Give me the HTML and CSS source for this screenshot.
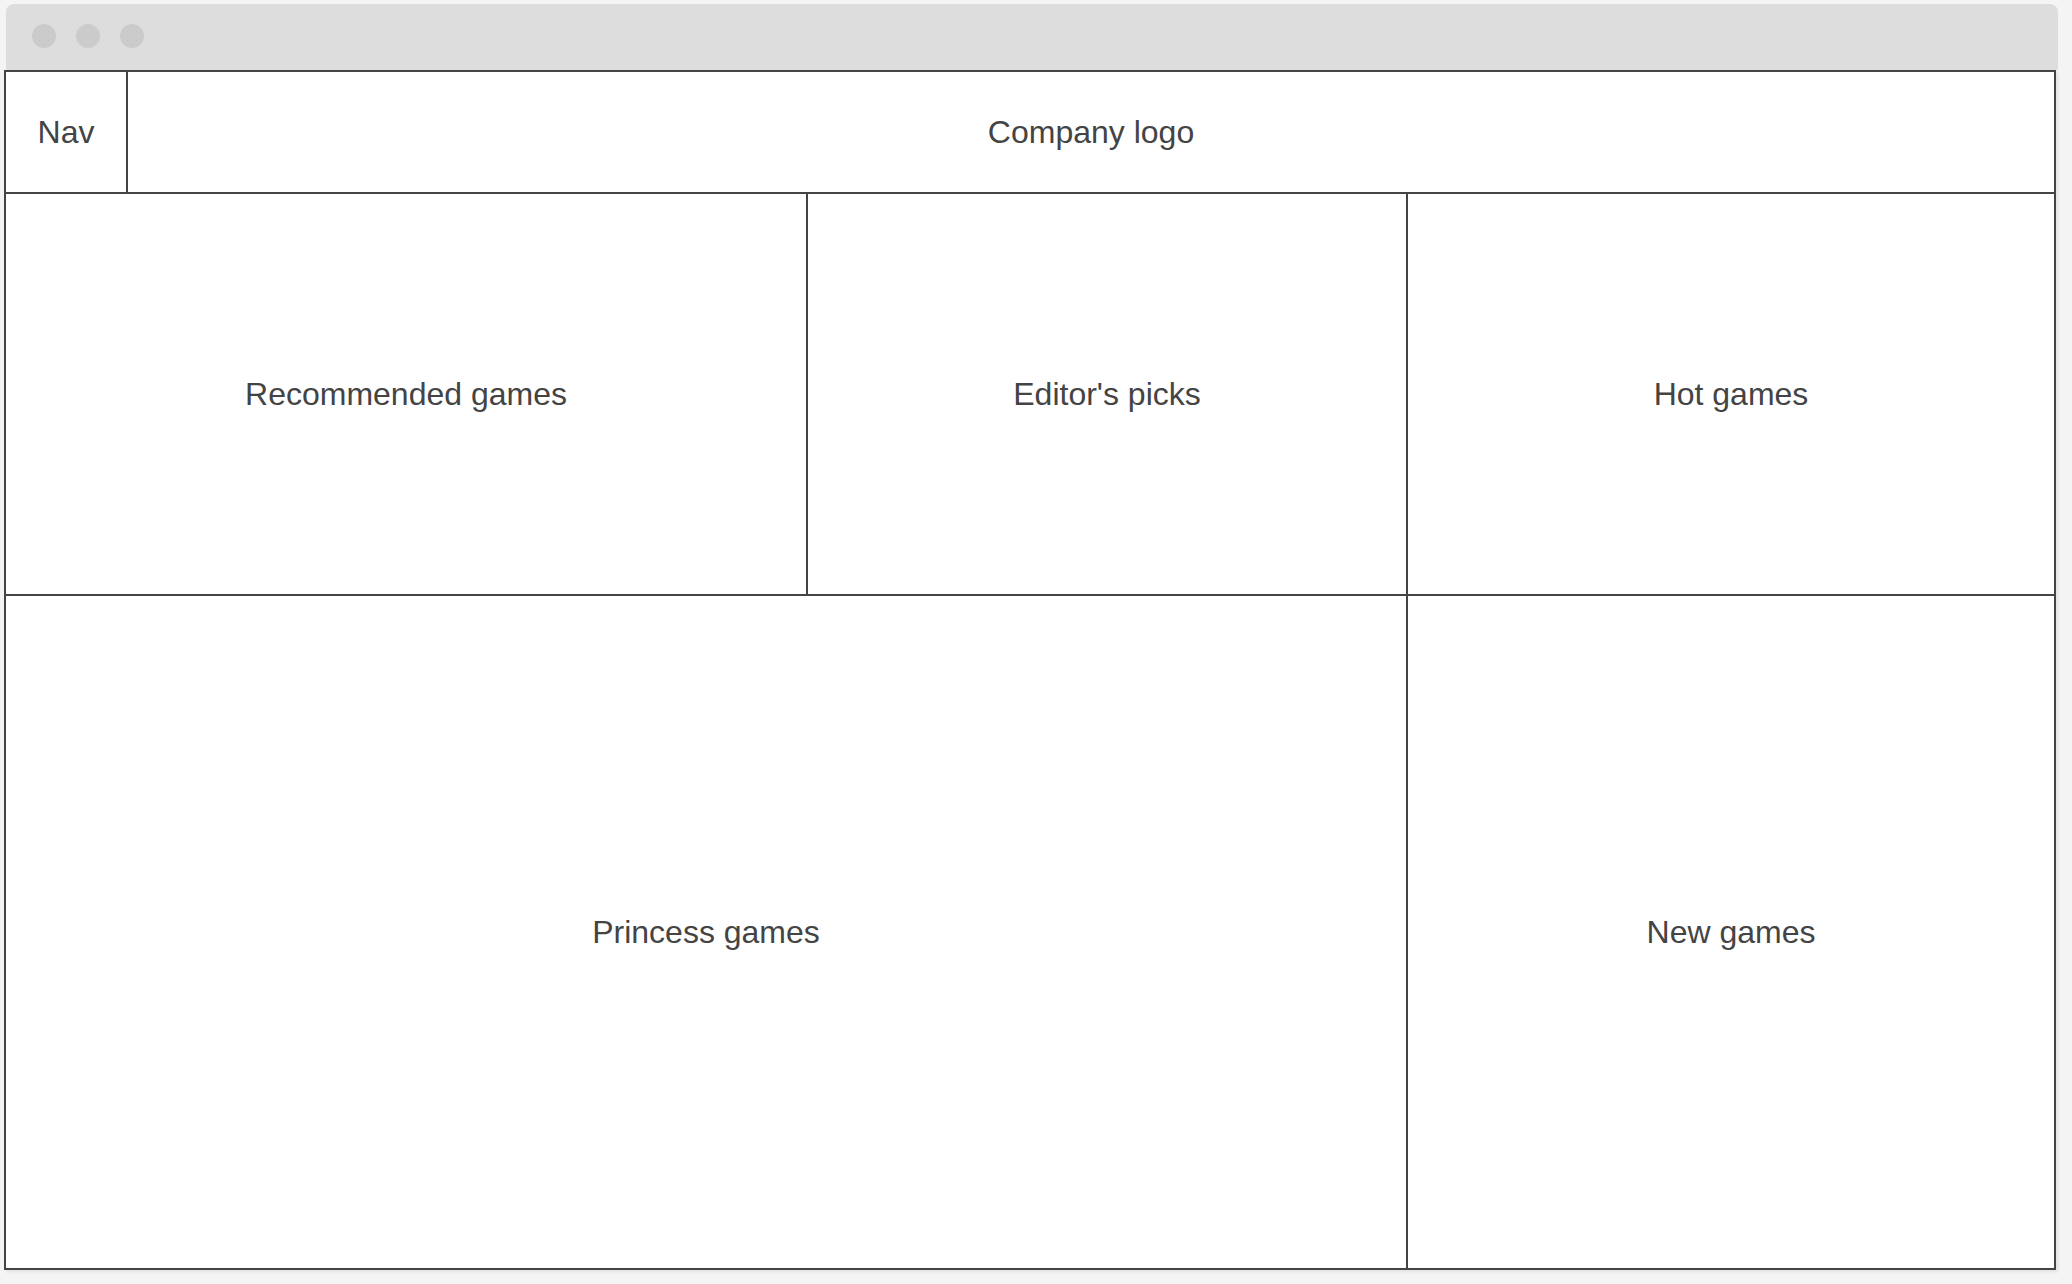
FILE: index.html
```html
<!DOCTYPE html>
<html lang="en">
<head>
  <meta charset="UTF-8" />
  <meta name="viewport" content="width=device-width, initial-scale=1" />
  <title>Games portal - wireframe</title>
  <link rel="stylesheet" href="styles.css">
</head>
<body>
  <div class="window-bar">
    <span class="dot"></span>
    <span class="dot"></span>
    <span class="dot"></span>
  </div>

  <main class="layout">
    <header class="top">
      <div class="cell nav">Nav</div>
      <div class="cell logo">Company logo</div>
    </header>
    <section class="cell">Recommended games</section>
    <section class="cell">Editor's picks</section>
    <section class="cell">Hot games</section>
    <section class="cell princess">Princess games</section>
    <section class="cell">New games</section>
  </main>
</body>
</html>
```

FILE: styles.css
```css
body {
  margin: 0;
  padding: 4px 0 0 0;
  background-color: #f4f4f4;
  font-family: 'Liberation Sans', Arial, sans-serif;
  color: #444;
  height: 1280px;
  overflow: hidden;
}

/* barra de la ventana con los tres puntos */
.window-bar {
  margin-left: 6px;
  width: 2052px;
  height: 66px;
  box-sizing: border-box;
  padding: 20px 0 0 26px;
  background: #dddddd;
  border-radius: 8px 8px 0 0;
  display: flex;
  gap: 20px;
}

.window-bar .dot {
  width: 24px;
  height: 24px;
  border-radius: 50%;
  background: #cbcbcb;
}

/* rejilla: el fondo oscuro hace de lineas */
.layout {
  margin-left: 4px;
  width: 2052px;
  box-sizing: border-box;
  display: grid;
  grid-template-columns: 800px 598px 646px;
  grid-template-rows: 120px 400px 672px;
  gap: 2px;
  padding: 2px;
  background: #444;
  box-shadow: 2px 2px 3px rgba(0, 0, 0, 0.08);
}

.top {
  grid-column: 1 / 4;
  display: grid;
  grid-template-columns: 120px 1fr;
  gap: 2px;
}

.cell {
  background: #fff;
  display: flex;
  align-items: center;
  justify-content: center;
  font-size: 32px;
}

.princess {
  grid-column: 1 / 3;
}
```
